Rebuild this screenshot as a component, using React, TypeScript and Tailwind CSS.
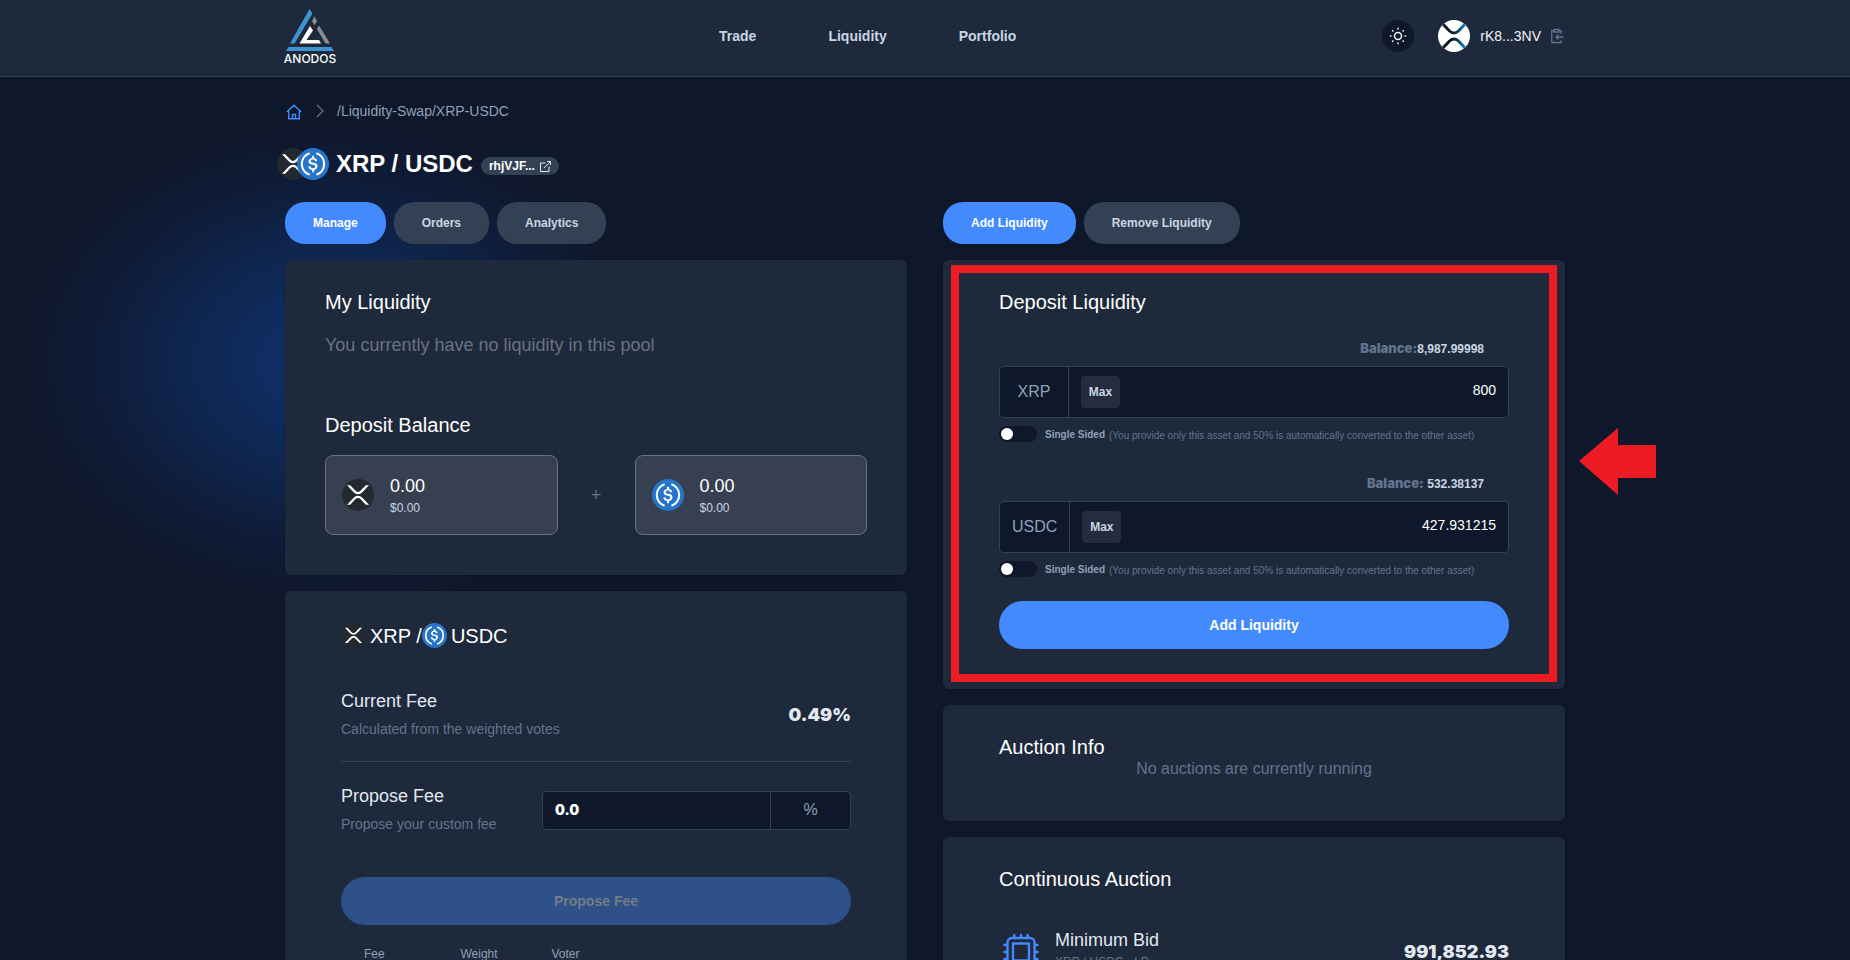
import React from 'react';

const tabBase = 'h-[42px] rounded-[20px] px-7 text-xs font-bold';
const tabActive = 'bg-[#448aff] text-white';
const tabIdle = 'bg-[#334155] text-slate-300';
const heavy = "font-['Inter'] font-black";

const XrpIcon: React.FC<{ className: string }> = ({ className }) => (
  <svg viewBox="0 0 32 32" className={className} aria-hidden="true">
    <circle cx="16" cy="16" r="16" fill="#23292f" />
    <path
      transform="translate(16 16) scale(1.1 1.18) translate(-16 -16.3)"
      d="M23.07 8h2.89l-6.01 5.96a5.62 5.62 0 0 1-7.9 0L6.04 8h2.89l4.57 4.52a3.56 3.56 0 0 0 5 0zM8.9 24.56H6l6.05-5.99a5.62 5.62 0 0 1 7.9 0L26 24.56h-2.89L18.5 20a3.56 3.56 0 0 0-5 0z"
      fill="#fff"
    />
  </svg>
);

const UsdcIcon: React.FC<{ className: string }> = ({ className }) => (
  <svg viewBox="0 0 32 32" className={className} aria-hidden="true">
    <circle cx="16" cy="16" r="16" fill="#2775ca" />
    <path
      d="M20.02 18.12c0-2.12-1.28-2.85-3.83-3.15-1.82-.24-2.18-.73-2.18-1.58s.6-1.39 1.82-1.39c1.09 0 1.7.36 2 1.27.06.18.24.3.42.3h.97a.42.42 0 0 0 .43-.42v-.06a3.03 3.03 0 0 0-2.73-2.49V9.15c0-.25-.19-.43-.49-.49h-.91c-.24 0-.42.19-.49.49v1.39c-1.82.24-2.97 1.46-2.97 2.97 0 2 1.21 2.79 3.76 3.09 1.7.3 2.24.67 2.24 1.64s-.85 1.64-2 1.64c-1.57 0-2.12-.67-2.3-1.58-.06-.24-.24-.36-.42-.36h-1.03a.42.42 0 0 0-.43.42v.06c.24 1.52 1.21 2.61 3.22 2.91v1.46c0 .24.18.42.48.48h.91c.24 0 .43-.18.49-.48v-1.46c1.82-.3 3.03-1.57 3.03-3.21z"
      transform="translate(16 16) scale(1.12) translate(-16 -16)"
      fill="#fff"
    />
    <path
      d="M12.6 5.2A11.4 11.4 0 0 0 12.6 26.8M19.4 5.2A11.4 11.4 0 0 1 19.4 26.8"
      fill="none"
      stroke="#fff"
      strokeWidth="2.1"
    />
  </svg>
);

const ChipIcon: React.FC = () => (
  <svg viewBox="0 0 44 38" className="h-[38px] w-11" fill="none" stroke="#448aff" strokeWidth="2.4" strokeLinecap="round" aria-hidden="true">
    <rect x="8.500" y="5" width="27" height="28" rx="4.500" />
    <rect x="14" y="10.500" width="16" height="17" strokeLinejoin="round" />
    <path d="M15.300 5V2M22 5V2M28.700 5V2M15.300 36v-3M22 36v-3M28.700 36v-3M8 12H5.500M8 19H5.500M8 26H5.500M38.500 12H36M38.500 19H36M38.500 26H36" />
  </svg>
);

const Logo: React.FC = () => (
  <a href="#" className="flex w-[50px] flex-col items-center" aria-label="Anodos home">
    <svg viewBox="0 0 50 43" className="h-[43px] w-[50px]" aria-hidden="true">
      <path d="M24.5 0l3 4.5L9.500 34.500H5z" fill="#3f93d1" />
      <path d="M25 17l3 4.500L21.500 31H34l2 3.500H14.500z" fill="#fff" />
      <path d="M34 16.500L45 34.500H40.500L32 20z" fill="#8a8d91" />
      <path d="M29.500 7.500l2.500 4.500-2.500 4.500-2.500-4.500z" fill="#8a8d91" />
      <path d="M3.500 38h43l2.500 4H1z" fill="#3f93d1" />
    </svg>
    <span className="font-['Inter'] text-[12px] leading-[14px] font-medium text-white">ANODOS</span>
  </a>
);

const Header: React.FC = () => (
  <header className="border-b border-slate-700 bg-[#1e293b]">
    <div className="mx-auto flex h-[76px] max-w-7xl items-center justify-between">
      <div className="pb-px"><Logo /></div>
      <nav className="flex gap-[72px] pb-1 pl-[18px] text-sm font-bold text-slate-300">
        <a href="#">Trade</a>
        <a href="#">Liquidity</a>
        <a href="#">Portfolio</a>
      </nav>
      <div className="flex items-center pb-1">
        <button aria-label="Toggle theme" className="flex size-8 items-center justify-center rounded-full bg-[#0f172a]">
          <svg viewBox="0 0 18 18" className="size-[18px]" fill="none" stroke="#f1f5f9" strokeWidth="1.500" aria-hidden="true">
            <circle cx="9" cy="9" r="3.500" />
            <path d="M9 .8v1.700M9 15.500v1.700M.8 9h1.700M15.500 9h1.700M3.200 3.200l1.200 1.200M13.600 13.600l1.200 1.200M3.200 14.800l1.200-1.200M13.600 4.400l1.200-1.200" />
          </svg>
        </button>
        <svg viewBox="0 0 32 32" className="ml-6 size-8" aria-hidden="true">
          <defs>
            <linearGradient id="avatar" x1="0" x2="1">
              <stop offset=".45" stopColor="#111a24" />
              <stop offset="1" stopColor="#0891c4" />
            </linearGradient>
            <clipPath id="round"><circle cx="16" cy="16" r="16" /></clipPath>
          </defs>
          <circle cx="16" cy="16" r="16" fill="#fff" />
          <g clipPath="url(#round)" fill="none" stroke="url(#avatar)" strokeWidth="3">
            <path d="M4 3l7.500 8q4.500 4 9 0L28 3" />
            <path d="M4 29l7.500-8q4.500-4 9 0L28 29" />
          </g>
        </svg>
        <span className="ml-[10px] text-sm text-slate-100">rK8...3NV</span>
        <button aria-label="Copy address" className="mr-[1px] ml-[9px] text-slate-500">
          <svg viewBox="0 0 14 16" className="h-4 w-[14px]" fill="none" stroke="currentColor" strokeWidth="1.300" aria-hidden="true">
            <path d="M3.500 2.700H1.800v11.800h9.400v-2.300M9.500 2.700h1.700V6M4 1.500h5v2.500H4zM13.500 9H6M8.500 6.500L6 9l2.500 2.500" />
          </svg>
        </button>
      </div>
    </div>
  </header>
);

const BalanceBox: React.FC<{ icon: React.ReactNode }> = ({ icon }) => (
  <div className="flex h-20 flex-1 items-center gap-4 rounded-lg border border-gray-500 bg-[#374050] px-4">
    {icon}
    <div className="pt-px">
      <p className="text-lg leading-6 text-white">0.00</p>
      <p className="text-xs leading-5 font-medium text-slate-300">$0.00</p>
    </div>
  </div>
);

const DepositField: React.FC<{ asset: string; balance: string; amount: string }> = ({ asset, balance, amount }) => (
  <div>
    <p className="mb-[7px] pr-[25px] text-right text-xs leading-5 font-bold text-slate-300">
      <span className={`${heavy} text-[13px] text-slate-500`}>Balance:</span>
      {balance}
    </p>
    <div className="flex h-[52px] overflow-hidden rounded border border-slate-700 bg-[#0f172a]">
      <label htmlFor={asset} className="flex min-w-[69px] items-center justify-center border-r border-slate-700 px-3 text-slate-400">
        {asset}
      </label>
      <button className="my-auto ml-3 h-8 w-[39px] rounded bg-[#242c3e] text-xs font-bold text-slate-300">Max</button>
      <input
        id={asset}
        defaultValue={amount}
        className="min-w-0 flex-1 bg-transparent px-3 pb-1 text-right text-sm text-white outline-none"
      />
    </div>
    <label className="mt-2 flex h-4 items-center text-[10px]">
      <input type="checkbox" className="peer sr-only" />
      <span className="flex h-4 w-[38px] items-center rounded-full bg-[#0f172a] px-[2px]">
        <span className="size-3 rounded-full bg-white" />
      </span>
      <span className="ml-2 font-bold text-slate-400">Single Sided</span>
      <span className="ml-1 pt-[2px] text-slate-500">
        (You provide only this asset and 50% is automatically converted to the other asset)
      </span>
    </label>
  </div>
);

const PoolColumn: React.FC = () => (
  <section className="flex min-w-0 flex-1 flex-col gap-4">
    <div className="flex gap-2">
      <button className={`${tabBase} ${tabActive}`}>Manage</button>
      <button className={`${tabBase} ${tabIdle}`}>Orders</button>
      <button className={`${tabBase} ${tabIdle}`}>Analytics</button>
    </div>

    <div className="rounded-md bg-[#1e293b] px-10 pt-7 pb-10 shadow">
      <h2 className="text-xl text-white">My Liquidity</h2>
      <p className="mt-[15px] text-lg leading-7 text-gray-500">You currently have no liquidity in this pool</p>
      <h2 className="mt-[52px] text-xl text-white">Deposit Balance</h2>
      <div className="mt-4 flex items-center">
        <BalanceBox icon={<XrpIcon className="size-8" />} />
        <span className="w-[77px] text-center text-lg text-gray-500">+</span>
        <BalanceBox icon={<UsdcIcon className="size-8" />} />
      </div>
    </div>

    <div className="rounded-md bg-[#1e293b] px-14 pt-8 pb-10 shadow">
      <h2 className="flex items-center text-xl leading-6 text-white">
        <XrpIcon className="mr-1 size-[25px]" />
        XRP /
        <UsdcIcon className="mr-1 size-[25px]" />
        USDC
      </h2>
      <div className="mt-[39px] flex items-center justify-between border-b border-slate-700 pb-[18px]">
        <div>
          <h3 className="text-lg leading-7 text-slate-200">Current Fee</h3>
          <p className="text-sm leading-7 text-slate-500">Calculated from the weighted votes</p>
        </div>
        <span className={`${heavy} text-lg text-slate-200`}>0.49%</span>
      </div>
      <div className="mt-5 flex items-center justify-between">
        <div>
          <h3 className="text-lg leading-7 text-slate-200">Propose Fee</h3>
          <p className="text-sm leading-7 text-slate-500">Propose your custom fee</p>
        </div>
        <div className="flex h-[39px] w-[309px] overflow-hidden rounded border border-slate-700 bg-[#0f172a]">
          <input
            aria-label="Propose fee"
            defaultValue="0.0"
            className={`${heavy} min-w-0 flex-1 bg-transparent px-3 text-sm text-white outline-none`}
          />
          <span className="w-20 border-l border-slate-700 text-center leading-9 text-slate-400">%</span>
        </div>
      </div>
      <button disabled className="mt-[39px] h-12 w-full rounded-[24px] bg-[#2d5188] text-sm font-bold text-[#757b86]">
        Propose Fee
      </button>
      <table className="mt-1 w-full border-x border-[#222d3f] text-left text-xs text-slate-400">
        <thead>
          <tr className="h-[50px]">
            <th className="w-[97px] pl-[22px] font-normal">Fee</th>
            <th className="w-[91px] pl-[22px] font-normal">Weight</th>
            <th className="pl-[22px] font-normal">Voter</th>
          </tr>
        </thead>
      </table>
    </div>
  </section>
);

const ActionColumn: React.FC = () => (
  <section className="flex min-w-0 flex-1 flex-col gap-4">
    <div className="flex gap-2">
      <button className={`${tabBase} ${tabActive}`}>Add Liquidity</button>
      <button className={`${tabBase} ${tabIdle}`}>Remove Liquidity</button>
    </div>

    <div className="relative rounded-md bg-[#1e293b] px-14 pt-7 pb-10 shadow">
      <div className="pointer-events-none absolute inset-x-2 top-[5px] bottom-[7px] border-8 border-[#ed1c24]" />
      <svg viewBox="0 0 77 67" className="absolute top-[168px] -right-[91px] h-[67px] w-[77px]" aria-hidden="true">
        <path d="M0 33L39 0v17h38v33H39v17z" fill="#ed1c24" />
      </svg>
      <h2 className="text-xl text-white">Deposit Liquidity</h2>
      <div className="mt-[22px] flex flex-col gap-[31px]">
        <DepositField asset="XRP" balance="8,987.99998" amount="800" />
        <DepositField asset="USDC" balance=" 532.38137" amount="427.931215" />
      </div>
      <button className="mt-6 h-12 w-full rounded-[24px] bg-[#448aff] text-sm font-bold text-white">Add Liquidity</button>
    </div>

    <div className="rounded-md bg-[#1e293b] px-14 pt-7 pb-10 shadow">
      <h2 className="text-xl leading-7 text-white">Auction Info</h2>
      <p className="pb-1 text-center leading-4 text-slate-500">No auctions are currently running</p>
    </div>

    <div className="rounded-md bg-[#1e293b] px-14 pt-7 pb-10 shadow">
      <h2 className="text-xl text-white">Continuous Auction</h2>
      <div className="mt-[35px] flex items-center justify-between">
        <div className="flex items-center gap-3">
          <ChipIcon />
          <div className="pb-1">
            <h3 className="text-lg leading-6 text-slate-200">Minimum Bid</h3>
            <p className="text-xs leading-5 text-slate-500">XRP / USDC - LP</p>
          </div>
        </div>
        <span className={`${heavy} text-lg text-slate-200`}>991,852.93</span>
      </div>
    </div>
  </section>
);

const App: React.FC = () => (
  <div className="min-h-screen bg-[#0f172a] font-['Liberation_Sans',Arial,sans-serif]">
    <Header />
    <div className="relative overflow-hidden pb-10">
      <div className="absolute top-[35px] left-[5px] h-[500px] w-[650px] bg-[radial-gradient(closest-side,#0f2f66,#0f2d61_20%,#0f264f_45%,#0f1d3b_70%,#0f182d_90%,#0f172a)]" />
      <main className="relative mx-auto max-w-7xl pt-6">
        <nav aria-label="Breadcrumb" className="flex items-center text-sm leading-5 text-slate-400">
          <a href="#" aria-label="Home" className="ml-[1px] pt-[2px] text-[#448aff]">
            <svg viewBox="0 0 16 16" className="size-4" fill="none" stroke="currentColor" strokeWidth="1.400" aria-hidden="true">
              <path d="M.8 8L8 1.300 15.200 8M2.700 6.500v8.300h10.600V6.500M6.500 14.500V10.500h3v4" />
            </svg>
          </a>
          <svg viewBox="0 0 8 14" className="mr-[13px] ml-[14px] h-[14px] w-2" fill="none" stroke="#64748b" strokeWidth="1.300" aria-hidden="true">
            <path d="M1 1l6 6-6 6" />
          </svg>
          <span>/Liquidity-Swap/XRP-USDC</span>
        </nav>
        <div className="mt-[27px] -ml-2 flex items-center">
          <XrpIcon className="size-8" />
          <UsdcIcon className="-ml-3 size-8" />
          <h1 className="ml-[7px] text-2xl font-bold text-white">XRP / USDC</h1>
          <a href="#" className="mt-1 ml-2 flex h-[18px] items-center gap-[5px] rounded-full bg-[#334155] px-2 text-xs font-bold text-white">
            rhjVJF...
            <svg viewBox="0 0 11 11" className="size-[11px]" fill="none" stroke="#e2e8f0" aria-hidden="true">
              <path d="M5.500 2h-5v8.500h8.500v-5M4 7l6.500-6.500M7 .5h3.500V4" />
            </svg>
          </a>
        </div>
        <div className="mt-[22px] flex gap-9">
          <PoolColumn />
          <ActionColumn />
        </div>
      </main>
    </div>
  </div>
);

export default App;
